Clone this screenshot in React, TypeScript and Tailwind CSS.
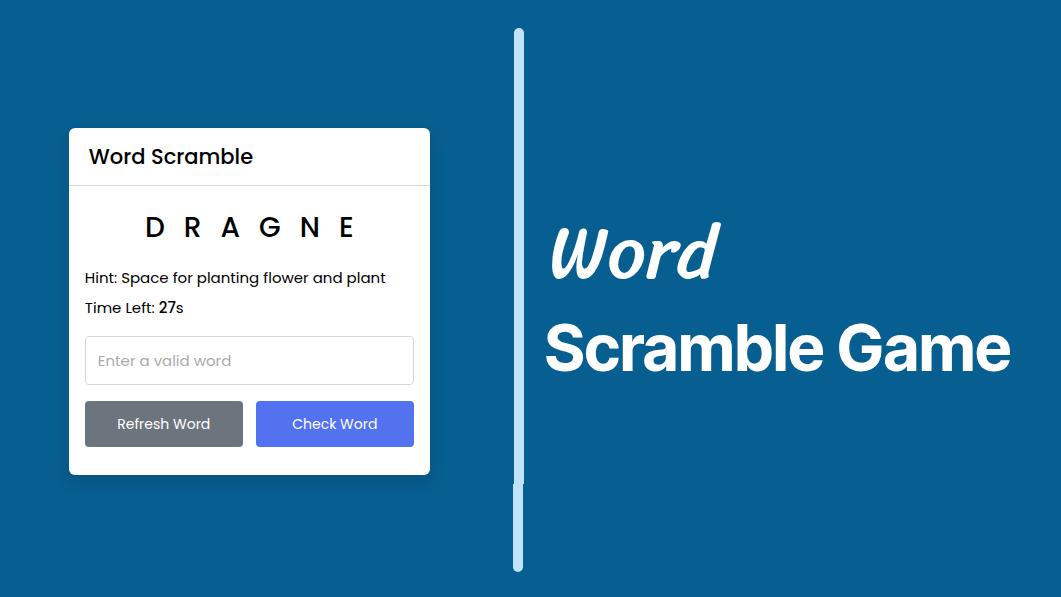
import { useState } from "react";

const letters = ["D", "R", "A", "G", "N", "E"];

function GameCard() {
  const [guess, setGuess] = useState("");

  return (
    <section className="w-full max-w-[361px] rounded-md bg-white text-black shadow-[0_8px_16px_rgba(0,0,0,0.1)]">
      <h2 className="border-b border-[#d5d8da] px-5 py-3 text-[21px] leading-[33px] font-medium">
        Word Scramble
      </h2>
      <form className="px-4 pt-6 pb-7" onSubmit={(event) => event.preventDefault()}>
        <p className="flex justify-center gap-[19px] text-[28px] leading-9 font-medium">
          {letters.map((letter) => (
            <span key={letter}>{letter}</span>
          ))}
        </p>
        <div className="mt-[17px] mb-[13px] text-[15px] leading-[30px]">
          <p className="whitespace-nowrap">Hint: Space for planting flower and plant</p>
          <p>
            Time Left: <b className="font-medium">27</b>s
          </p>
        </div>
        <input
          type="text"
          aria-label="Enter a valid word"
          placeholder="Enter a valid word"
          value={guess}
          onChange={(event) => setGuess(event.target.value)}
          className="block h-[49px] w-full rounded border border-[#d5d8da] px-3 text-[15px] outline-none placeholder:text-[#aaaaaa]"
        />
        <div className="mt-4 grid grid-cols-2 gap-[13px] text-sm text-white">
          <button type="button" className="h-[46px] rounded bg-[#6c757d]">
            Refresh Word
          </button>
          <button type="submit" className="h-[46px] rounded bg-[#5372f0]">
            Check Word
          </button>
        </div>
      </form>
    </section>
  );
}

function Divider() {
  return (
    <div aria-hidden="true" className="flex w-[11px] flex-col">
      <div className="w-[10px] flex-1 self-end rounded-t-full bg-[#bfe3ff]" />
      <div className="h-[88px] w-[10px] self-start rounded-b-full bg-[#bfe3ff]" />
    </div>
  );
}

export default function App() {
  return (
    <main className="grid min-h-screen grid-cols-[47%_auto_1fr] bg-[#075e90] pt-7 pb-[25px] font-['Poppins','Inter',sans-serif]">
      <div className="flex items-center justify-center pt-[3px]">
        <GameCard />
      </div>
      <div className="flex pl-3.5">
        <Divider />
      </div>
      <h1 className="flex flex-col justify-center pl-[21px] text-white">
        <span className="pl-1 font-['Sriracha','Open_Sans',cursive] text-[76px] leading-[96px] font-normal">
          Word
        </span>
        <span className="font-['Inter_Tight','Inter',sans-serif] text-[64px] leading-[96px] font-bold whitespace-nowrap">
          Scramble Game
        </span>
      </h1>
    </main>
  );
}
